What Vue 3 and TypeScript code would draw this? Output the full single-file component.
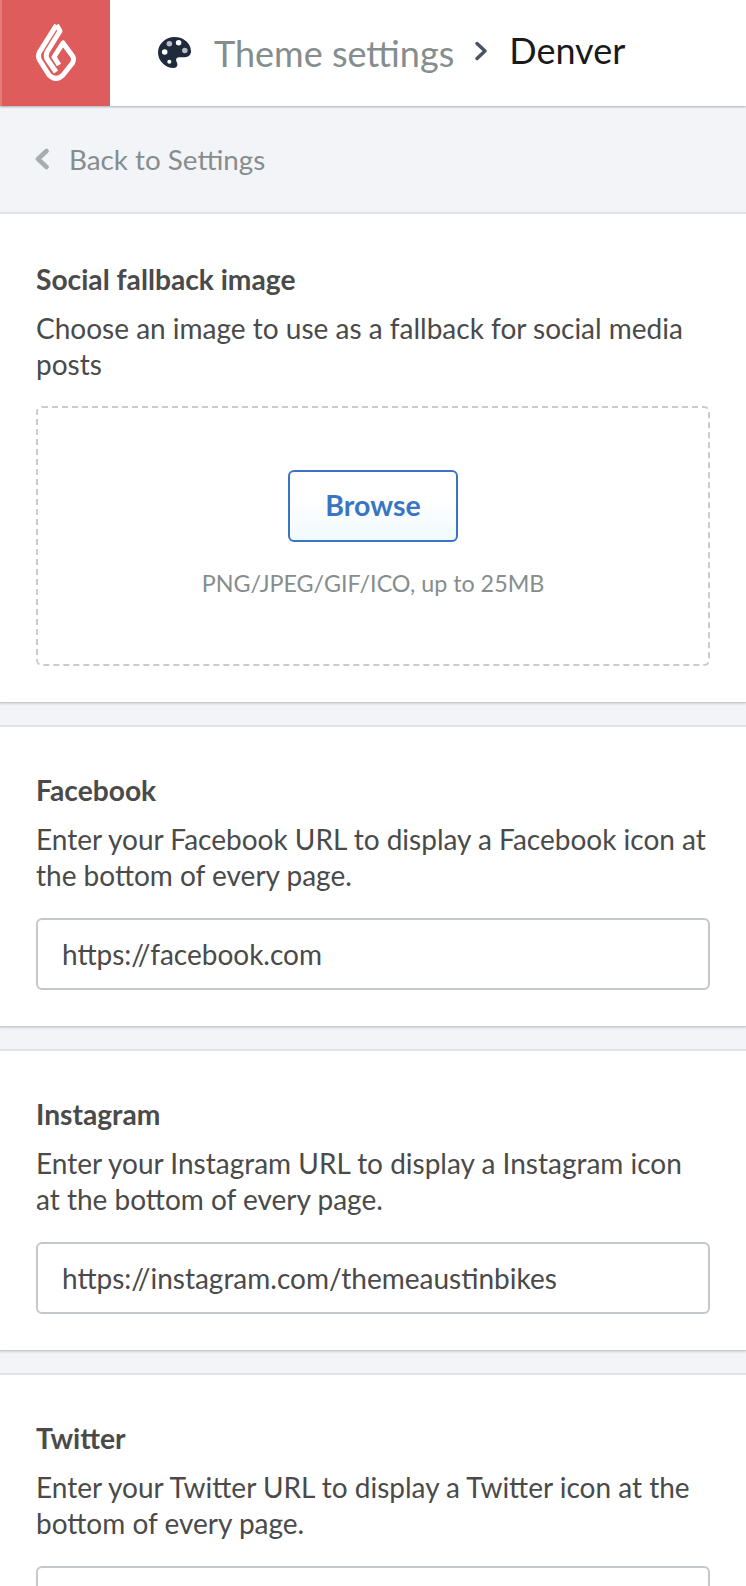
<script setup lang="ts">
const sections = [
  { title: 'Facebook', text: 'Enter your Facebook URL to display a Facebook icon at the bottom of every page.', value: 'https://facebook.com' },
  { title: 'Instagram', text: 'Enter your Instagram URL to display a Instagram icon at the bottom of every page.', value: 'https://instagram.com/themeaustinbikes' },
  { title: 'Twitter', text: 'Enter your Twitter URL to display a Twitter icon at the bottom of every page.', value: '' }
]
</script>

<template>
  <div class="page">
    <header class="topbar">
      <div class="logo">
        <svg width="40" height="60" viewBox="0 0 40 60" fill="none" stroke="#fff" stroke-width="5" stroke-linejoin="round">
          <path d="M20.500 2 L3.500 29 Q1.500 33 3.500 37 L13 52 Q20 59 27 52 L36.500 40 Q38.500 36 36.500 33 L27 20 L18 34 L23 42" />
          <path d="M20.500 2 L24 8 L11 29 Q9.500 33 11 36 L20 49" />
        </svg>
      </div>
      <div class="crumbs">
        <svg class="palette" width="33" height="33" viewBox="0 0 32 32">
          <path fill="#1f2a3c" d="M16 1C7 1 0 8 0 16s7 15 15 15c2.500 0 3.800-1.500 3.800-3.400 0-2-1.300-2.800-1.300-4.400 0-1.700 1.300-2.700 3-2.700H26c3.500 0 6-2.500 6-5.500C32 7 25 1 16 1z" />
          <circle cx="6.500" cy="15.500" r="2.700" fill="#fff" />
          <circle cx="11" cy="7.500" r="2.700" fill="#b9bcc2" />
          <circle cx="20" cy="6.500" r="2.700" fill="#fff" />
          <circle cx="26" cy="14" r="2.700" fill="#b9bcc2" />
          <circle cx="11" cy="25" r="2" fill="#fff" />
        </svg>
        <span class="crumb-muted">Theme settings</span>
        <svg class="sep" width="14" height="20" viewBox="0 0 14 20" fill="none" stroke="#4a5266" stroke-width="3.500" stroke-linecap="round" stroke-linejoin="round"><path d="M3 2.500l8 7.500-8 7.500" /></svg>
        <span class="crumb-current">Denver</span>
      </div>
    </header>

    <div class="back">
      <svg width="16" height="22" viewBox="0 0 16 22" fill="none" stroke="#a6adad" stroke-width="4.500" stroke-linejoin="round" stroke-linecap="round"><path d="M12.500 3L4 11l8.500 8" /></svg>
      <span>Back to Settings</span>
    </div>

    <section class="card first">
      <h2>Social fallback image</h2>
      <p>Choose an image to use as a fallback for social media posts</p>
      <div class="drop">
        <button type="button" class="browse">Browse</button>
        <small>PNG/JPEG/GIF/ICO, up to 25MB</small>
      </div>
    </section>

    <section v-for="s in sections" :key="s.title" class="card">
      <h2>{{ s.title }}</h2>
      <p>{{ s.text }}</p>
      <input type="text" :value="s.value" />
    </section>
  </div>
</template>

<style>
html, body { margin: 0; background: #f3f4f8; }
</style>

<style scoped>
.page {
  height: 1586px;
  overflow: hidden;
  background: #f3f4f8;
  font-family: Lato, "Open Sans", sans-serif;
  color: #4a4a4a;
}
.topbar {
  height: 106px;
  display: flex;
  background: #fff;
  box-shadow: 0 1px 2px rgba(0, 0, 0, 0.3);
  position: relative;
}
.logo {
  width: 110px;
  background: #de5c5c;
  border-left: 2px solid #e47c7c;
  box-sizing: border-box;
  display: flex;
  align-items: center;
  justify-content: center;
}
.crumbs {
  display: flex;
  align-items: center;
  padding-left: 48px;
  font-size: 36px;
}
.palette { margin: 0 23px 2px 0; }
.crumb-muted { color: #868d8d; }
.sep { margin: 0 21px 4px 20px; }
.crumb-current { color: #1a1a1a; margin-bottom: 6px; }
.back {
  height: 106px;
  display: flex;
  align-items: center;
  gap: 19px;
  padding-left: 34px;
  font-size: 27.800px;
  color: #868d8d;
}
.card {
  background: #fff;
  border-top: 2px solid #e2e3e6;
  border-bottom: 1px solid #c9cbce;
  box-shadow: 0 1px 2px rgba(0, 0, 0, 0.14);
  padding: 45px 36px 36px;
  margin-bottom: 22px;
}
.card.first { padding-top: 47px; }
h2 {
  margin: 0 0 13px;
  font-size: 28.200px;
  line-height: 36px;
  font-weight: 700;
  color: #4a4a4a;
}
p {
  margin: 0 0 25px;
  font-size: 28px;
  line-height: 36px;
  color: #4a4a4a;
}
.first p { margin-bottom: 24px; }
.drop {
  height: 260px;
  padding-top: 62px;
  border: 2px dashed #c9cbce;
  border-radius: 6px;
  box-sizing: border-box;
  display: flex;
  flex-direction: column;
  align-items: center;
  gap: 26px;
}
.browse {
  width: 170px;
  height: 72px;
  padding: 0 0 2px;
  border: 2px solid #3a75c4;
  border-radius: 6px;
  background: linear-gradient(#fff 40%, #f0fafe);
  color: #3a75c4;
  font: 700 28.500px Lato, sans-serif;
}
small {
  font-size: 23.300px;
  line-height: 30px;
  color: #868d8d;
}
input {
  display: block;
  width: 100%;
  height: 72px;
  box-sizing: border-box;
  padding: 0 24px;
  border: 2px solid #c4c8cb;
  border-radius: 6px;
  font: 28px Lato, sans-serif;
  color: #4a4a4a;
  outline: none;
}
</style>
